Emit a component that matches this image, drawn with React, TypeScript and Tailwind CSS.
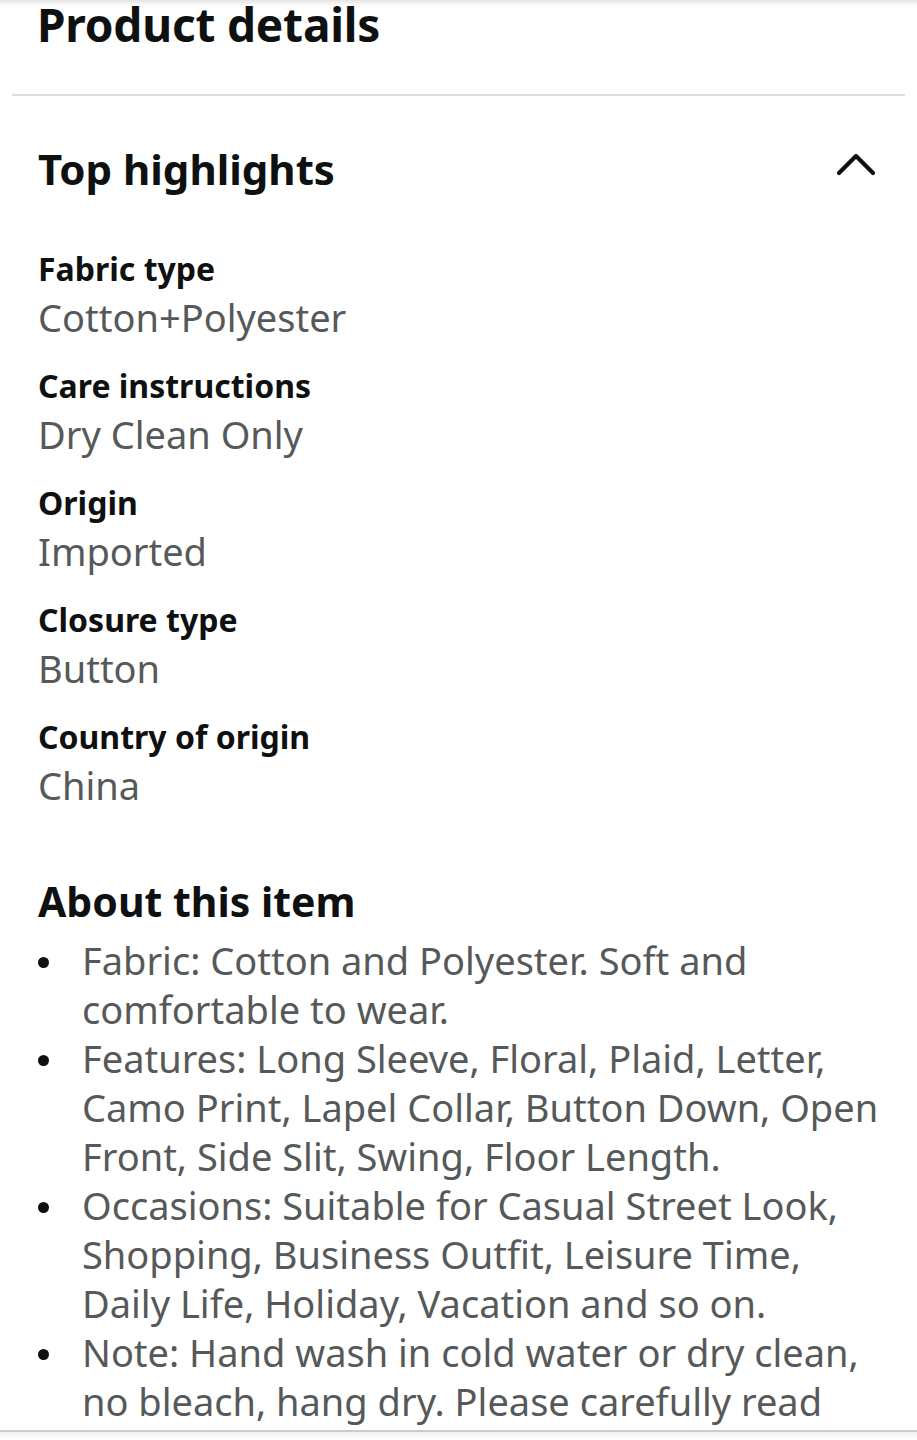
const HIGHLIGHTS = [
  { label: "Fabric type", value: "Cotton+Polyester" },
  { label: "Care instructions", value: "Dry Clean Only" },
  { label: "Origin", value: "Imported" },
  { label: "Closure type", value: "Button" },
  { label: "Country of origin", value: "China" },
]

const BULLETS = [
  "Fabric: Cotton and Polyester. Soft and comfortable to wear.",
  "Features: Long Sleeve, Floral, Plaid, Letter, Camo Print, Lapel Collar, Button Down, Open Front, Side Slit, Swing, Floor Length.",
  "Occasions: Suitable for Casual Street Look, Shopping, Business Outfit, Leisure Time, Daily Life, Holiday, Vacation and so on.",
  "Note: Hand wash in cold water or dry clean, no bleach, hang dry. Please carefully read the size chart before ordering.",
]

export default function App() {
  return (
    <div
      className="relative h-[1440px] w-[917px] overflow-hidden bg-white text-[#0f1111]"
      style={{ fontFamily: '"Noto Sans", "Open Sans", sans-serif' }}
    >
      {/* top edge shadow */}
      <div className="absolute inset-x-0 top-0 h-[6px] bg-gradient-to-b from-[#e4e4e4] to-white" />

      <h1 className="pl-[37px] text-[46px] font-bold leading-[48px] tracking-[-0.2px]">Product details</h1>
      <div className="mx-[12px] mt-[46px] h-[2px] bg-[#dddddd]" />

      <div className="flex items-center justify-between pl-[38px] pr-[41px] pt-[46px]">
        <h2 className="text-[42px] font-bold leading-[54px]">Top highlights</h2>
        <svg width="40" height="24" viewBox="0 0 40 24" fill="none" className="-mt-[10px]" aria-hidden>
          <path d="M3 21 L20 4 L37 21" stroke="#0f1111" strokeWidth="4.2" strokeLinecap="round" strokeLinejoin="round" />
        </svg>
      </div>

      <div className="flex flex-col gap-[21px] pl-[38px] pt-[50px]">
        {HIGHLIGHTS.map((h) => (
          <div key={h.label} className="flex flex-col">
            <span className="text-[32px] font-bold leading-[46px]">{h.label}</span>
            <span className="text-[38px] leading-[50px] text-[#565959]">{h.value}</span>
          </div>
        ))}
      </div>

      <h2 className="pl-[38px] pt-[64px] text-[41px] font-bold leading-[54px]">About this item</h2>

      <ul className="mt-[8px] flex w-[886px] flex-col pl-[38px]">
        {BULLETS.map((b) => (
          <li key={b} className="flex items-start text-[38px] leading-[49px] text-[#565959]">
            <span className="flex h-[49px] w-[44px] shrink-0 items-center pt-[4px]">
              <span className="size-[11px] rounded-full bg-[#0f1111]" />
            </span>
            <span>{b}</span>
          </li>
        ))}
      </ul>

      {/* bottom bar */}
      <div className="absolute inset-x-0 bottom-0 h-[10px] border-t-[2px] border-[#c8ccd0] bg-gradient-to-b from-[#eef0f2] to-white" />
    </div>
  )
}
